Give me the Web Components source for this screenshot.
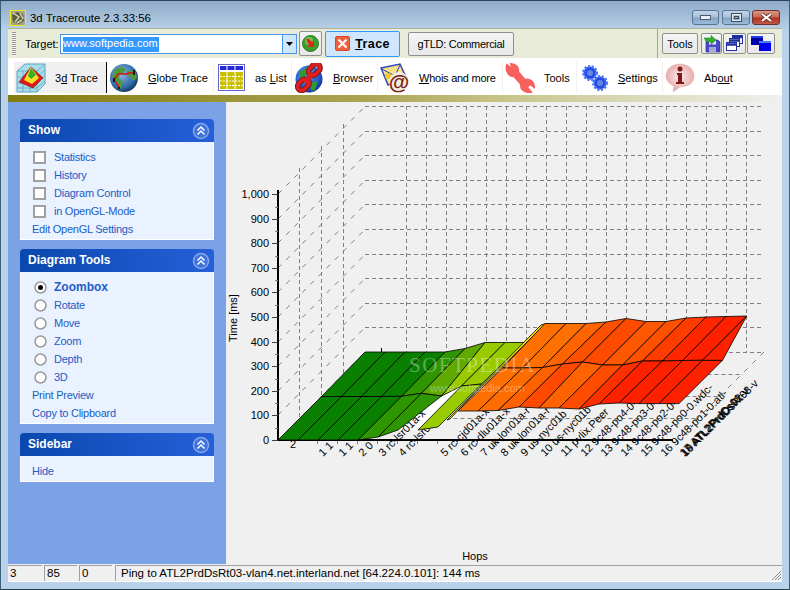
<!DOCTYPE html>
<html>
<head>
<meta charset="utf-8">
<title>3d Traceroute</title>
<style>
  html, body { margin: 0; padding: 0; background: #b9d1ea; }
</style>
</head>
<body>
<tr-window>
  <tr-titlebar slot="title">3d Traceroute 2.3.33:56</tr-titlebar>
  <tr-targetbar slot="target"></tr-targetbar>
  <tr-navbar slot="nav">
    <nav-item active style="width:93px">
      <svg slot="icon" width="30" height="30" viewBox="0 0 30 30">
        <path d="M1 8 L9 1 H29 V21 L21 29 H1 Z" fill="#a8dcea" stroke="#5fa8c0"/>
        <path d="M1 14H21M1 20H21M1 25H21M7 8V29M14 8V29M21 8V29M1 8H21L29 1M21 14L29 7M21 20L29 13M21 25L29 18" stroke="#5fa8c0" stroke-width=".8" fill="none"/>
        <path d="M3 19 L15 4 L27 15 L17 25 Z" fill="#e01818" stroke="#801010" stroke-width=".6"/>
        <path d="M8 17 L15 4 L23 15 L16 21 Z" fill="#f8e020"/>
        <path d="M12 13 L15 5 L20 12 L15 16 Z" fill="#30b030"/>
      </svg>
      <u-t>3<u>d</u> Trace</u-t>
    </nav-item>
    <nav-item style="width:107px">
      <svg slot="icon" width="30" height="30" viewBox="0 0 30 30">
        <defs><radialGradient id="gl" cx=".4" cy=".35" r=".7"><stop offset="0" stop-color="#8fb8e8"/><stop offset=".7" stop-color="#2f6aa8"/><stop offset="1" stop-color="#12304f"/></radialGradient></defs>
        <circle cx="15" cy="15" r="14" fill="url(#gl)"/>
        <path d="M5 8 C9 3 15 4 17 6 L14 11 L11 11 L10 15 L14 19 L12 26 L9 24 L8 18 L3 14 Z" fill="#4f9a3a"/>
        <path d="M18 8 L26 8 L28 15 L24 18 L22 14 L18 13 Z" fill="#4f9a3a"/>
        <path d="M5 17 L9 11 H17 L20 10 H25 M5 17 L9 22 L10 25" stroke="#e01010" stroke-width="1.5" fill="none"/>
        <path d="M25 7v5M5 15v4M10 24v2" stroke="#000" stroke-width="1.5"/>
      </svg>
      <u-t><u>G</u>lobe Trace</u-t>
    </nav-item>
    <nav-item style="width:78px">
      <svg slot="icon" width="30" height="30" viewBox="0 0 30 30">
        <rect x="2.500" y="1.500" width="26" height="26" fill="#fff" stroke="#6464c8"/>
        <rect x="4" y="3" width="23" height="4" fill="#2828d8"/>
        <path d="M11 3v4M19 3v4" stroke="#fff"/>
        <rect x="4" y="9" width="23" height="17" fill="#c8c000"/>
        <path d="M4 13.500H27M4 18H27M4 22.500H27" stroke="#fff" stroke-dasharray="2 1"/>
        <path d="M11 9v17M19 9v17" stroke="#fff"/>
      </svg>
      <u-t>as <u>L</u>ist</u-t>
    </nav-item>
    <nav-item style="width:86px">
      <svg slot="icon" width="30" height="30" viewBox="0 0 30 30">
        <defs><radialGradient id="gb" cx=".4" cy=".35" r=".7"><stop offset="0" stop-color="#5a9cf0"/><stop offset=".8" stop-color="#1c4cc0"/><stop offset="1" stop-color="#102a70"/></radialGradient></defs>
        <circle cx="15" cy="16" r="13.500" fill="url(#gb)"/>
        <path d="M5 9 L14 4 L16 9 L10 14 L5 14 Z M16 20 L24 18 L21 27 L17 28 Z" fill="#2f9a30"/>
        <g fill="none" stroke="#801818" stroke-width="5.500"><rect x="14" y="3" width="13" height="8" rx="4" transform="rotate(-45 20 7)"/><rect x="3" y="18" width="13" height="8" rx="4" transform="rotate(-45 9 22)"/></g>
        <g fill="none" stroke="#e02020" stroke-width="3.500"><rect x="14" y="3" width="13" height="8" rx="4" transform="rotate(-45 20 7)"/><rect x="3" y="18" width="13" height="8" rx="4" transform="rotate(-45 9 22)"/><path d="M11 20 L19 10" stroke-width="4"/></g>
      </svg>
      <u-t><u>B</u>rowser</u-t>
    </nav-item>
    <nav-item style="width:125px">
      <svg slot="icon" width="30" height="30" viewBox="0 0 30 30">
        <path d="M1 5 L20 1 L26 14 L8 22 Z" fill="#f8e088" stroke="#2848c0" stroke-width="1.500"/>
        <path d="M2 6 L15 13 L20 2" fill="none" stroke="#2848c0"/>
        <circle cx="8" cy="13" r="3" fill="#f8c820"/>
        <circle cx="19" cy="19" r="10" fill="#f4ece0"/>
        <text x="19" y="26" font-family="Liberation Sans, sans-serif" font-size="21" font-weight="700" fill="#7c2418" text-anchor="middle">@</text>
      </svg>
      <u-t style="letter-spacing:-.25px"><u>W</u>hois and more</u-t>
    </nav-item>
    <nav-item style="width:74px">
      <svg slot="icon" width="30" height="30" viewBox="0 0 30 30">
        <path d="M2 2 L8 7 L6 1 C11 1 14 5 13 9 L20 17 C24 15 29 19 29 24 L25 21 L22 24 L26 29 C20 30 15 26 16 21 L9 13 C5 14 0 9 2 2 Z" fill="#f86060" stroke="#f86060" stroke-width="2"/>
      </svg>
      <u-t>Tools</u-t>
    </nav-item>
    <nav-item style="width:86px">
      <svg slot="icon" width="30" height="30" viewBox="0 0 30 30">
        <g fill="#2848e0" stroke="#4878ff" stroke-width="3" stroke-dasharray="2 1.500">
          <circle cx="11" cy="10" r="6.500"/><circle cx="21" cy="20" r="6.500"/>
        </g>
        <circle cx="11" cy="10" r="3" fill="#6088e8"/><circle cx="21" cy="20" r="3" fill="#6088e8"/>
      </svg>
      <u-t><u>S</u>ettings</u-t>
    </nav-item>
    <nav-item style="width:76px" last>
      <svg slot="icon" width="30" height="30" viewBox="0 0 30 30">
        <defs><radialGradient id="ab" cx=".5" cy=".45" r=".6"><stop offset="0" stop-color="#fbeaea"/><stop offset="1" stop-color="#e4a0a0"/></radialGradient></defs>
        <path d="M15 1 C23 1 29 6 29 13 C29 20 23 24 15 24 L8 29 L9 23 C4 21 1 17 1 13 C1 6 7 1 15 1 Z" fill="url(#ab)" stroke="#e4b0b0" stroke-width=".6"/>
        <circle cx="15" cy="6" r="2.500" fill="#801818"/>
        <path d="M12 10 H17 V19 H19 V21 H11 V19 H13 V12 H12 Z" fill="#801818"/>
      </svg>
      <u-t>Ab<u>ou</u>t</u-t>
    </nav-item>
  </tr-navbar>
  <tr-sidebar slot="side">
    <side-panel heading="Show">
      <side-row kind="check">Statistics</side-row>
      <side-row kind="check">History</side-row>
      <side-row kind="check">Diagram Control</side-row>
      <side-row kind="check">in OpenGL-Mode</side-row>
      <side-row>Edit OpenGL Settings</side-row>
    </side-panel>
    <side-panel heading="Diagram Tools">
      <side-row kind="radio" on>Zoombox</side-row>
      <side-row kind="radio">Rotate</side-row>
      <side-row kind="radio">Move</side-row>
      <side-row kind="radio">Zoom</side-row>
      <side-row kind="radio">Depth</side-row>
      <side-row kind="radio">3D</side-row>
      <side-row>Print Preview</side-row>
      <side-row>Copy to Clipboard</side-row>
    </side-panel>
    <side-panel heading="Sidebar">
      <side-row>Hide</side-row>
    </side-panel>
  </tr-sidebar>
  <trace-chart slot="chart"></trace-chart>
  <tr-status slot="status"></tr-status>
</tr-window>

<script>
const UI_FONT = '"Liberation Sans", Arial, sans-serif';

class TrWindow extends HTMLElement {
  constructor() {
    super();
    this.attachShadow({ mode: 'open' });
    this.shadowRoot.innerHTML = `
      <style>
        :host {
          display: flex;
          flex-direction: column;
          width: 790px;
          height: 590px;
          box-sizing: border-box;
          overflow: hidden;
          font-family: ${UI_FONT};
          font-size: 11px;
          color: #000;
          background: linear-gradient(180deg, #8fabc8 0, #b9d2ea 30px, #b9d2ea 100%);
          border-top: 1px solid #2d4258;
          border-left: 1px solid #3c5f78;
          border-right: 1px solid #3c5f78;
          border-bottom: 1px solid #24404c;
        }
        .client {
          flex: 1;
          display: flex;
          flex-direction: column;
          min-height: 0;
          margin: 0 7px 7px 7px;
        }
        .main { flex: 1; display: flex; min-height: 0; }
      </style>
      <slot name="title"></slot>
      <div class="client">
        <slot name="target"></slot>
        <slot name="nav"></slot>
        <div class="main">
          <slot name="side"></slot>
          <slot name="chart"></slot>
        </div>
        <slot name="status"></slot>
      </div>`;
  }
}

class TrTitlebar extends HTMLElement {
  constructor() {
    super();
    this.attachShadow({ mode: 'open' });
    this.shadowRoot.innerHTML = `
      <style>
        :host {
          display: flex;
          align-items: center;
          height: 27px;
          box-sizing: border-box;
          flex: none;
          font-size: 11.400px;
          padding: 6px 9px 0 9px;
        }
        .app { width: 16px; height: 16px; margin: 0 4px 0 0; }
        .txt { flex: 1; color: #000; }
        .btns { display: flex; gap: 3px; }
        .b {
          width: 27px; height: 15px;
          border: 1px solid #5a7490;
          border-radius: 3px;
          box-sizing: border-box;
          background: linear-gradient(180deg, #c4d6e8 0, #a6c0da 48%, #86a4c4 52%, #9cbad8 100%);
          display: flex; align-items: center; justify-content: center;
        }
        .b.max { width: 28px; }
        .b.close { width: 28px; margin-left: -1px; background: linear-gradient(180deg, #d89888 0, #c86454 48%, #b03020 52%, #c05848 100%); border-color: #70302a; }
      </style>
      <svg class="app" viewBox="0 0 16 16">
        <rect x=".5" y=".5" width="15" height="15" fill="#a4a488" stroke="#f0e820"/>
        <path d="M2 5 L7 2 L13 4 L14 11 L9 14 L3 12 Z" fill="#5c5c44"/>
        <path d="M3 3 L9 7 L5 12 M10 3 L13 9 M7 13 L12 10" stroke="#d4d4b0" stroke-width="1.500" fill="none"/>
      </svg>
      <div class="txt"><slot></slot></div>
      <div class="btns">
        <div class="b"><svg width="11" height="5"><rect x=".5" y=".5" width="10" height="4" fill="#e8eef4" stroke="#4c5c70"/></svg></div>
        <div class="b max"><svg width="11" height="9"><rect x="1" y="1" width="9" height="7" fill="none" stroke="#e8eef4" stroke-width="2"/><rect x=".5" y=".5" width="10" height="8" fill="none" stroke="#3c4c60"/><rect x="3.500" y="3.500" width="4" height="2" fill="none" stroke="#3c4c60"/></svg></div>
        <div class="b close"><svg width="13" height="9"><path d="M2 1 L11 8 M11 1 L2 8" stroke="#50201c" stroke-width="3.500"/><path d="M2 1 L11 8 M11 1 L2 8" stroke="#fff" stroke-width="2.200"/></svg></div>
      </div>`;
  }
}

class TrTargetbar extends HTMLElement {
  constructor() {
    super();
    this.attachShadow({ mode: 'open' });
    this.shadowRoot.innerHTML = `
      <style>
        :host {
          display: flex;
          align-items: center;
          height: 30px;
          flex: none;
          box-sizing: border-box;
          background: #e9ebd9;
          border-top: 1px solid #b2b498;
          font-size: 11px;
        }
        .grip {
          width: 4px; height: 24px; margin-left: 4px;
          background: repeating-linear-gradient(180deg, #9a9a90 0 1px, #f4f4ec 1px 2px);
        }
        .lab { margin-left: 9px; width: 35px; }
        .combo {
          width: 237px; height: 20px; box-sizing: border-box;
          border: 1px solid #4a94ea; background: #fff;
          display: flex; align-items: stretch;
        }
        .val { flex: 1; padding: 2px 0 0 2px; }
        .val span { background: #3399ff; color: #fff; display: inline-block; height: 15px; padding-right: 1px; }
        .drop {
          width: 13px; border-left: 1px solid #4a94ea; background: #cfe5fb;
          display: flex; align-items: center; justify-content: center;
        }
        .btn {
          box-sizing: border-box; display: flex; align-items: center; justify-content: center;
          border: 1px solid #8e8f8f; border-radius: 2px;
          background: linear-gradient(180deg, #f4f4f4, #e8e8e8);
        }
        .go { width: 23px; height: 25px; margin-left: 2px; }
        .trace {
          width: 75px; height: 26px; margin-left: 3px; gap: 5px;
          background: #cfe6fc; border: 1px solid #3399ff;
          font-weight: 700; font-size: 12.500px; letter-spacing: .4px;
        }
        .gtld { width: 106px; height: 24px; margin-left: 8px; padding-top: 1px; letter-spacing: -.3px; }
        .fill { flex: 1; align-self: stretch; border-right: 1px solid #a4a690; }
        .right { width: 124px; display: flex; align-items: center; gap: 1px; padding-left: 4px; box-sizing: border-box; }
        .right .btn { height: 21px; }
      </style>
      <div class="grip"></div>
      <div class="lab">Target:</div>
      <div class="combo">
        <div class="val"><span>www.softpedia.com</span></div>
        <div class="drop"><svg width="7" height="4"><path d="M0 0H7L3.500 4Z" fill="#000"/></svg></div>
      </div>
      <div class="btn go">
        <svg width="17" height="17" viewBox="0 0 17 17">
          <circle cx="8.500" cy="8.500" r="8" fill="#3aa02c" stroke="#2a7a20"/>
          <circle cx="7" cy="6" r="4" fill="#88d070" opacity=".7"/>
          <path d="M4 4 H7 L10 7 L12 5 V12 H5 L7 10 Z" fill="#e02818"/>
        </svg>
      </div>
      <div class="btn trace">
        <svg width="15" height="15" viewBox="0 0 15 15">
          <rect x=".5" y=".5" width="14" height="14" rx="1.500" fill="#f0603c" stroke="#d84828"/>
          <path d="M3.500 3.500 L11.500 11.500 M11.500 3.500 L3.500 11.500" stroke="#fff" stroke-width="2.200"/>
        </svg>
        <span><u>T</u>race</span>
      </div>
      <div class="btn gtld">gTLD: Commercial</div>
      <div class="fill"></div>
      <div class="right">
        <div class="btn" style="width:36px">Tools</div>
        <div class="btn" style="width:21px;margin-left:2px">
          <svg width="18" height="18" viewBox="0 0 18 18">
            <path d="M3 5 H15 L17 7 V17 H3 Z" fill="#4848c8" stroke="#2a2a88" stroke-width=".6"/>
            <rect x="6" y="5.500" width="7" height="4" fill="#e8e8f8"/>
            <rect x="6" y="12" width="7" height="5" fill="#a8a8d8"/>
            <path d="M1 3 H8 V0.500 L13 5 L8 9.500 V7 H4 Z" fill="#30b030" stroke="#187018" stroke-width=".5"/>
          </svg>
        </div>
        <div class="btn" style="width:23px">
          <svg width="17" height="17" viewBox="0 0 17 17" fill="#fff" stroke="#2030a0">
            <rect x="6.500" y=".5" width="10" height="8"/><rect x="3.500" y="3.500" width="10" height="8"/><rect x=".5" y="7.500" width="10" height="8"/>
            <path d="M7 2H16M4 5.500H13M1 9.500H10" stroke-width="2.500"/>
          </svg>
        </div>
        <div class="btn" style="width:28px">
          <svg width="22" height="17" viewBox="0 0 22 17">
            <rect x="1" y="1" width="12" height="9" fill="#0000a8"/>
            <rect x="1" y="1" width="12" height="2" fill="#2040e0"/>
            <rect x="9" y="6" width="12" height="10" fill="#0000f0"/>
            <rect x="9" y="6" width="12" height="2" fill="#4080ff"/>
          </svg>
        </div>
      </div>`;
  }
}

class TrNavbar extends HTMLElement {
  constructor() {
    super();
    this.attachShadow({ mode: 'open' });
    this.shadowRoot.innerHTML = `
      <style>
        :host { display: block; flex: none; }
        .row {
          display: flex; height: 37px; box-sizing: border-box;
          background: #fff; padding: 4px 0 0 6px;
        }
        .olive {
          height: 7px;
          background: linear-gradient(90deg, #857c10 0, #a9a250 45%, #c8c68c 65%, #f0f0f0 100%);
        }
      </style>
      <div class="row"><slot></slot></div>
      <div class="olive"></div>`;
  }
}

class NavItem extends HTMLElement {
  constructor() {
    super();
    this.attachShadow({ mode: 'open' });
    this.shadowRoot.innerHTML = `
      <style>
        :host {
          display: flex; align-items: center; flex: none; box-sizing: border-box;
          padding-left: 1px; height: 31px; font-size: 11px;
          border-right: 1px solid #f0f0f0;
        }
        :host([active]) { background: #f0f0f0; border-right: 1px solid #000; }
        :host([last]) { border-right: none; }
        .ic { width: 32px; margin-right: 8px; display: flex; justify-content: center; }
      </style>
      <div class="ic"><slot name="icon"></slot></div>
      <slot></slot>`;
  }
}

class UT extends HTMLElement {
  constructor() {
    super();
    this.attachShadow({ mode: 'open' });
    this.shadowRoot.innerHTML = `<style>:host { display: inline; white-space: nowrap; }</style><slot></slot>`;
  }
}

class TrSidebar extends HTMLElement {
  constructor() {
    super();
    this.attachShadow({ mode: 'open' });
    this.shadowRoot.innerHTML = `
      <style>
        :host {
          display: flex; flex-direction: column; gap: 9px; flex: none;
          width: 218px; box-sizing: border-box; padding: 17px 12px 0 12px;
          background: #7ba2e6;
        }
      </style>
      <slot></slot>`;
  }
}

class SidePanel extends HTMLElement {
  constructor() {
    super();
    this.attachShadow({ mode: 'open' });
    this.shadowRoot.innerHTML = `
      <style>
        :host { display: block; }
        .head {
          height: 23px; display: flex; align-items: center; justify-content: space-between;
          padding: 0 4px 0 8px; border-radius: 4px 4px 0 0;
          background: linear-gradient(90deg, #0a48ae, #2560d8);
          color: #fff; font-weight: 700; font-size: 12px;
        }
        .head span { margin-top: -2px; }
        .body {
          background: #eaf2ff; border: 1px solid #fff; border-top: none;
          padding: 6px 0 1px 0;
        }
      </style>
      <div class="head">
        <span id="t"></span>
        <svg width="18" height="18" viewBox="0 0 18 18">
          <circle cx="9" cy="9" r="7.500" fill="#3f72d8" stroke="#85a8ea" stroke-width="1.500"/>
          <path d="M5.500 8.500 L9 5 L12.500 8.500 M5.500 12.500 L9 9 L12.500 12.500" fill="none" stroke="#fff" stroke-width="1.500"/>
        </svg>
      </div>
      <div class="body"><slot></slot></div>`;
  }
  connectedCallback() {
    this.shadowRoot.getElementById('t').textContent = this.getAttribute('heading');
  }
}

class SideRow extends HTMLElement {
  constructor() {
    super();
    this.attachShadow({ mode: 'open' });
    this.shadowRoot.innerHTML = `
      <style>
        :host {
          display: flex; align-items: center; height: 18px;
          padding-left: 11px; color: #215dc6; font-size: 11px; letter-spacing: -.25px;
        }
        :host([kind]) { padding-left: 12px; }
        :host([on]) { font-weight: 700; font-size: 12px; letter-spacing: 0; }
        .mark { width: 21px; display: flex; align-items: center; flex: none; }
        .mark:empty { display: none; }
      </style>
      <span class="mark" id="m"></span><slot></slot>`;
  }
  connectedCallback() {
    const kind = this.getAttribute('kind');
    const m = this.shadowRoot.getElementById('m');
    if (kind === 'check') {
      m.innerHTML = '<svg width="13" height="13"><rect x="1" y="1" width="11" height="11" fill="#fff" stroke="#a0a0a0" stroke-width="2"/></svg>';
    } else if (kind === 'radio') {
      const dot = this.hasAttribute('on') ? '<circle cx="6.500" cy="6.500" r="2.500" fill="#000"/>' : '';
      m.innerHTML = `<svg width="13" height="13" style="margin-left:1px"><circle cx="6.500" cy="6.500" r="5.500" fill="#fff" stroke="#9a9a9a" stroke-width="1.500"/>${dot}</svg>`;
    }
  }
}

class TraceChart extends HTMLElement {
  constructor() {
    super();
    this.attachShadow({ mode: 'open' });
    this.shadowRoot.innerHTML = `
      <style>
        :host { display: block; flex: 1; background: #f0f0f0; min-width: 0; }
        svg { display: block; }
        text { font-family: ${UI_FONT}; fill: #000; }
      </style>
      <svg id="s" width="556" height="462" viewBox="226 102 556 462"></svg>`;
  }

  connectedCallback() {
    let out = '';
    const dash = (x1, y1, x2, y2, d = '4 3') =>
      `<line x1="${x1}" y1="${y1}" x2="${x2}" y2="${y2}" stroke="#808080" stroke-dasharray="${d}"/>`;

    // back wall and floor grid
    for (let i = 0; i <= 10; i++) {
      const yb = Math.round(106 + i * 24.6) + .5;
      const ya = Math.round(194 + i * 24.6);
      out += dash(365, yb, 764, yb);
      out += dash(278, ya, 365, yb, '5 6.5');
    }
    for (let i = 0; i < 18; i++) {
      const x = Math.round(405.6 + i * 20.05) + .5;
      out += dash(x, 106, x, 352);
    }
    [[343.5, 124, 374, 743], [321.5, 146, 396, 721], [299.5, 168, 418, 699]].forEach(([x, top, y, end]) => {
      out += dash(x, top, x, y);
      out += dash(x, y + .5, end, y + .5);
    });
    out += dash(764, 352, 680, 436, '5 6.5');

    // axes
    out += `<rect x="277" y="190" width="2" height="251" fill="#000"/>`;
    out += `<rect x="277" y="439" width="396" height="2" fill="#000"/>`;
    for (let i = 0; i <= 10; i++) {
      const y = Math.round(440 - i * 24.6);
      out += `<line x1="272" y1="${y + .5}" x2="278" y2="${y + .5}" stroke="#404040"/>`;
      if (i < 10) out += `<line x1="275" y1="${y - 11.5}" x2="278" y2="${y - 11.5}" stroke="#808080"/>`;
      const lab = i === 10 ? '1,000' : String(i * 100);
      out += `<text x="269" y="${y + 4}" font-size="11" text-anchor="end">${lab}</text>`;
    }
    for (let i = 0; i < 20; i++) {
      out += `<line x1="${317.500 + i * 20}" y1="441" x2="${317.500 + i * 20}" y2="444" stroke="#808080"/>`;
    }
    out += `<text x="237" y="318" font-size="11" text-anchor="middle" transform="rotate(-90 237 318)">Time [ms]</text>`;
    out += `<text x="475" y="560" font-size="11" text-anchor="middle">Hops</text>`;

    // white wedge seen through the gap in the surface
    out += `<polygon points="398,430 441,396 461,386 418,430" fill="#fff"/>`;
    out += `<polygon points="438,427 458,411 470,400 480,386" fill="#fff"/>`;

    // hop labels, behind the surface
    out += `<text x="290" y="448" font-size="11">2</text>`;
    const hops = [
      [325, '1 1'], [345, '1 1'], [365, '2 0'], [385, '3 rc-lsr01a-x'], [405, '4 rc-lsr01a-x'],
      [447, '5 rc-cjd01a-x'], [467, '6 rc-dlu01a-x'], [487, '7 uk-lon01a-r'], [507, '8 uk-lon01a-r'],
      [527, '9 us-nyc01b'], [547, '10 us-nyc01b'], [567, '11 pvlix.Peer'], [587, '12 9c48-po4-0-'],
      [607, '13 9c48-po3-0-'], [627, '14 9c48-po2-0-'], [647, '15 9c48-po0-0.wdc-'], [667, '16 9c48-po1-0.atl-'],
      [686, '17 ATL2PrdCs01-v'], [687, '18 ATL2PrdDs02-v'], [688, '19 ATL2PrdDsRt03-v']
    ];
    hops.forEach(([x, t]) => {
      out += `<text x="${x - 2}" y="457" font-size="11" transform="rotate(-45 ${x - 2} 457)">${t}</text>`;
    });

    const poly = (pts, fill) =>
      `<polygon points="${pts.map(p => p.join(',')).join(' ')}" fill="${fill}" stroke="#000" stroke-width=".8"/>`;

    // green part: back half first, then the front half
    const g1 = '#0a8000', g2 = '#2e9600', g3 = '#5fa900', g4 = '#99cc00';
    const gm = [[321.5,396.5],[341.5,396.5],[361.5,396.5],[381.5,396.5],[401.5,396.3],[421.5,393.3],[441.5,396],[461.5,386],[481.5,384]];
    const gb = [[365,352],[385,352],[405,352],[425,352],[445,352],[465,348.5],[485,342.5],[505,342.5],[525,342.5]];
    const gbCol = [g1, g1, g1, g1, g2, g3, g4, g4];
    for (let i = 0; i < 8; i++) out += poly([gm[i], gm[i + 1], gb[i + 1], gb[i]], gbCol[i]);

    const gf = [[278,440],[298,440],[318,440],[338,440],[358,440],[378,437],[398,430]];
    const gfCol = [g1, g1, g1, g1, g2, g2];
    for (let i = 0; i < 6; i++) out += poly([gf[i], gf[i + 1], gm[i + 1], gm[i]], gfCol[i]);
    out += poly([[418,430],[438,427],[481.5,384],[461.5,386]], g4);

    // narrow yellow slope between lime and orange
    out += poly([[447,420],[450,419],[468,400],[546,323.5],[541,325]], '#f6e800');

    // orange to red part
    const of = [[458,411],[478,411],[498,410.5],[519,407],[539,408],[559,408],[579,409],[599,404],[619,403],[639,403.6],[659,403.6],[679,403.6]];
    const om = [[502.5,368],[522.5,368],[542.5,367.5],[562.5,364],[582.5,362],[602.5,365],[622.5,365],[642.5,361],[662.5,361],[682.5,360.5],[702.5,360.3],[722.5,360.3]];
    const ob = [[545,323.5],[566,323.5],[586,323.5],[606,322],[626,318.5],[646,321.5],[666,321.5],[686,318],[706,317],[726,316.5],[746.7,316],[746.7,316]];
    const oc = ['#ff7000','#ff7000','#ff6400','#ff5000','#ff4a00','#ff5800','#ff5000','#ff3c00','#ff2600','#ff2000','#ff2000'];
    const ofc = ['#ff7000','#ff6c00','#ff6000','#ff4800','#ff6200','#ff4c00','#ff3000','#ff2000','#ff2000','#ff2000','#ff2000'];
    for (let i = 0; i < 10; i++) out += poly([om[i], om[i + 1], ob[i + 1], ob[i]], oc[i]);
    for (let i = 0; i < 11; i++) out += poly([of[i], of[i + 1], om[i + 1], om[i]], ofc[i]);
    out += poly([om[10], om[11], ob[10]], oc[9]);

    out += `<path d="M381.500 352V348" stroke="#000"/>`;

    // watermark
    out += `<text x="409" y="372" font-size="21" letter-spacing="1.500" style="font-family:'Liberation Serif',serif;fill:rgba(255,255,255,.34)">SOFTPEDIA</text>`;
    out += `<text x="430" y="392" font-size="11" style="fill:rgba(255,255,255,.34)">www.softpedia.com</text>`;

    this.shadowRoot.getElementById('s').innerHTML = out;
  }
}

class TrStatus extends HTMLElement {
  constructor() {
    super();
    this.attachShadow({ mode: 'open' });
    this.shadowRoot.innerHTML = `
      <style>
        :host {
          display: flex; flex: none; height: 18px; box-sizing: border-box;
          background: #f0f0f0; border-bottom: 1px solid #fff; font-size: 11.500px; gap: 2px;
          padding-top: 1px; position: relative;
        }
        .p { box-sizing: border-box; border-top: 1px solid #a0a0a0; border-left: 1px solid #a0a0a0; padding: 1px 0 0 2px; white-space: nowrap; }
        .m { flex: 1; padding-left: 5px; }
        .grip { position: absolute; right: 0; bottom: 0; }
      </style>
      <div class="p" style="width:34px;border-left:none">3</div>
      <div class="p" style="width:33px">85</div>
      <div class="p" style="width:33px;margin-right:1px">0</div>
      <div class="p m">Ping to ATL2PrdDsRt03-vlan4.net.interland.net [64.224.0.101]: 144 ms</div>
      <svg class="grip" width="12" height="12"><path d="M11 2L2 11M11 5L5 11M11 8L8 11" stroke="#909090"/></svg>`;
  }
}

customElements.define('tr-window', TrWindow);
customElements.define('tr-titlebar', TrTitlebar);
customElements.define('tr-targetbar', TrTargetbar);
customElements.define('tr-navbar', TrNavbar);
customElements.define('nav-item', NavItem);
customElements.define('u-t', UT);
customElements.define('tr-sidebar', TrSidebar);
customElements.define('side-panel', SidePanel);
customElements.define('side-row', SideRow);
customElements.define('trace-chart', TraceChart);
customElements.define('tr-status', TrStatus);
</script>
</body>
</html>
